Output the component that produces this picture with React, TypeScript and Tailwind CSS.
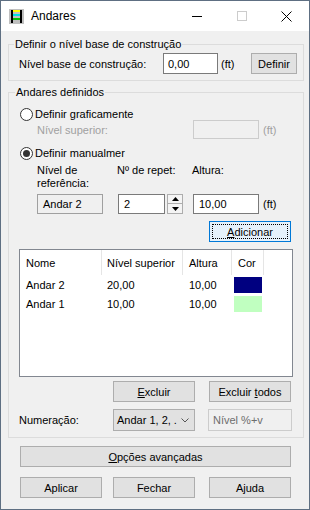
import type { ReactNode } from 'react';

function Btn({ children, className = '' }: { children: ReactNode; className?: string }) {
  return (
    <div className={`flex h-[21px] items-center justify-center border border-[#adadad] bg-[#e1e1e1] text-black ${className}`}>
      {children}
    </div>
  );
}

function Radio({ checked }: { checked?: boolean }) {
  return (
    <div className="flex h-[13px] w-[13px] items-center justify-center rounded-full border border-[#333333] bg-white">
      {checked && <div className="h-[7px] w-[7px] rounded-full bg-[#333333]" />}
    </div>
  );
}

function LadderIcon() {
  return (
    <svg width="15" height="15" viewBox="0 0 15 15">
      <rect x="0" y="0" width="15" height="15" fill="#c0c0c0" />
      <rect x="3" y="1" width="9" height="2" fill="#ffff00" />
      <rect x="3" y="5" width="9" height="2" fill="#00e0e0" />
      <rect x="3" y="9" width="9" height="2" fill="#00c000" />
      <rect x="2" y="1" width="2" height="13" fill="#000000" />
      <rect x="11" y="1" width="2" height="13" fill="#000000" />
    </svg>
  );
}

export default function App() {
  const rows = [
    { nome: 'Andar 2', nivel: '20,00', altura: '10,00', cor: 'bg-[#000080]' },
    { nome: 'Andar 1', nivel: '10,00', altura: '10,00', cor: 'bg-[#c0ffc0]' },
  ];

  return (
    <div className="h-[510px] w-[310px] overflow-hidden border border-[#5e6f82] bg-[#f0f0f0] font-['Liberation_Sans',Arial,sans-serif] text-[11px] leading-[14px] text-black">
      {/* title bar */}
      <div className="flex h-[30px] items-center bg-white">
        <div className="ml-[8px] flex h-[15px] w-[15px]">
          <LadderIcon />
        </div>
        <span className="ml-[7px] text-[12px]">Andares</span>
        <div className="ml-auto flex h-full">
          <div className="flex w-[45px] items-center justify-center">
            <div className="h-px w-[10px] bg-black" />
          </div>
          <div className="flex w-[45px] items-center justify-center">
            <div className="h-[10px] w-[10px] border border-[#cccccc]" />
          </div>
          <div className="flex w-[45px] items-center justify-center">
            <svg width="11" height="11" viewBox="0 0 11 11">
              <path d="M0.5 0.5 L10.5 10.5 M10.5 0.5 L0.5 10.5" stroke="#000" strokeWidth="1" />
            </svg>
          </div>
        </div>
      </div>

      {/* base level */}
      <fieldset className="ml-[7px] mt-[6px] w-[296px] border border-[#dcdcdc] p-0">
        <legend className="ml-[5px] px-[1px] leading-[14px]">Definir o nível base de construção</legend>
        <div className="mt-[2px] flex h-[21px] items-center pb-0 pl-[10px]">
          <span className="w-[144px]">Nível base de construção:</span>
          <div className="flex h-[21px] w-[55px] items-center border border-[#7a7a7a] bg-white pl-[4px]">0,00</div>
          <span className="ml-[3px] w-[27px]">(ft)</span>
          <Btn className="ml-[3px] w-[46px]">Definir</Btn>
        </div>
        <div className="h-[6px]" />
      </fieldset>

      {/* floors */}
      <fieldset className="ml-[7px] mt-[4px] w-[296px] border border-[#dcdcdc] p-0">
        <legend className="ml-[6px] px-[1px] leading-[14px]">Andares definidos</legend>
        <div className="flex flex-col pb-[6px] pl-[11px]">
          <div className="mt-[8px] flex h-[14px] items-center">
            <Radio />
            <span className="ml-[2px]">Definir graficamente</span>
          </div>
          <div className="-mt-px flex h-[19px] items-center text-[#a0a0a0]">
            <span className="ml-[17px] w-[156px]">Nível superior:</span>
            <div className="h-[19px] w-[66px] border border-[#cccccc] bg-[#f0f0f0]" />
            <span className="ml-[4px]">(ft)</span>
          </div>
          <div className="mt-[7px] flex h-[14px] items-center">
            <Radio checked />
            <span className="ml-[2px]">Definir manualmer</span>
          </div>
          <div className="mt-[4px] flex items-start leading-[13px]">
            <div className="ml-[17px] w-[80px]">
              Nível de
              <br />
              referência:
            </div>
            <div className="w-[75px]">Nº de repet:</div>
            <div>Altura:</div>
          </div>
          <div className="mt-[4px] flex h-[20px] items-center">
            <div className="ml-[17px] flex h-[20px] w-[66px] items-center border border-[#a0a0a0] bg-[#f0f0f0] pl-[5px]">Andar 2</div>
            <div className="ml-[15px] flex h-[20px] w-[47px] items-center border border-[#7a7a7a] bg-white pl-[5px]">2</div>
            <div className="ml-[2px] flex h-[20px] w-[16px] flex-col">
              <div className="flex h-[10px] items-center justify-center border border-[#adadad] bg-[#f4f4f4]">
                <svg width="7" height="4" viewBox="0 0 7 4"><path d="M3.5 0 L7 4 L0 4 Z" fill="#000" /></svg>
              </div>
              <div className="flex h-[10px] items-center justify-center border border-t-0 border-[#adadad] bg-[#f4f4f4]">
                <svg width="7" height="4" viewBox="0 0 7 4"><path d="M0 0 L7 0 L3.5 4 Z" fill="#000" /></svg>
              </div>
            </div>
            <div className="ml-[10px] flex h-[20px] w-[66px] items-center border border-[#7a7a7a] bg-white pl-[5px]">10,00</div>
            <span className="ml-[4px]">(ft)</span>
          </div>
          <div className="ml-[189px] mt-[7px] flex h-[21px] w-[82px] border border-[#0078d7] bg-[#e5f1fb] p-[2px]">
            <div className="flex flex-1 items-center justify-center border border-dotted border-black">
              <span><u>A</u>dicionar</span>
            </div>
          </div>

          {/* list */}
          <div className="-ml-px mt-[7px] h-[128px] w-[274px] border border-[#828790] bg-white">
            <div className="flex h-[25px] items-center">
              <div className="flex h-full w-[82px] items-center border-r border-[#e5e5e5] pl-[6px]">Nome</div>
              <div className="flex h-full w-[81px] items-center border-r border-[#e5e5e5] pl-[5px]">Nível superior</div>
              <div className="flex h-full w-[49px] items-center border-r border-[#e5e5e5] pl-[6px]">Altura</div>
              <div className="flex h-full w-[32px] items-center border-r border-[#e5e5e5] pl-[6px]">Cor</div>
            </div>
            {rows.map((r) => (
              <div key={r.nome} className="flex h-[19px] items-center">
                <div className="w-[82px] pl-[6px]">{r.nome}</div>
                <div className="w-[81px] pl-[5px]">{r.nivel}</div>
                <div className="w-[49px] pl-[6px]">{r.altura}</div>
                <div className="w-[32px] pl-[2px]">
                  <div className={`h-[16px] w-[28px] ${r.cor}`} />
                </div>
              </div>
            ))}
          </div>

          <div className="mt-[4px] flex">
            <Btn className="ml-[93px] w-[82px]"><span><u>E</u>xcluir</span></Btn>
            <Btn className="ml-[14px] w-[82px]"><span>Excluir <u>t</u>odos</span></Btn>
          </div>

          <div className="-ml-px mt-[7px] flex h-[22px] items-center">
            <span className="w-[94px]">Numeração:</span>
            <div className="flex h-[22px] w-[82px] items-center justify-between border border-[#adadad] bg-[#e1e1e1] pl-[3px] pr-[5px]">
              <span>Andar 1, 2, .</span>
              <svg width="8" height="5" viewBox="0 0 8 5"><path d="M0.5 0.5 L4 4 L7.5 0.5" stroke="#555" fill="none" /></svg>
            </div>
            <div className="ml-[13px] flex h-[22px] w-[84px] items-center border border-[#cccccc] bg-[#f0f0f0] pl-[4px] text-[#6d6d6d]">Nível %+v</div>
          </div>
        </div>
      </fieldset>

      <Btn className="ml-[19px] mt-[8px] w-[271px]"><span><u>O</u>pções avançadas</span></Btn>

      <div className="mt-[10px] flex">
        <Btn className="ml-[19px] w-[82px]">Aplicar</Btn>
        <Btn className="ml-[11px] w-[82px]">Fechar</Btn>
        <Btn className="ml-[14px] w-[82px]">Ajuda</Btn>
      </div>
    </div>
  );
}
